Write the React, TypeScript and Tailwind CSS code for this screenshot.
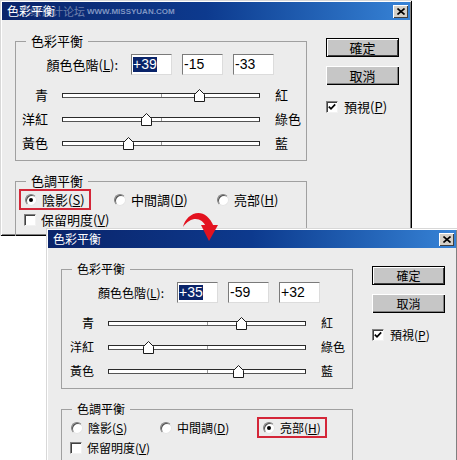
import React from "react";

type DlgProps = {
  values: [string, string, string];
  nums: [number, number, number];
  selected: 0 | 1 | 2;
  small?: boolean;
  watermark?: boolean;
  pos: string;
};

function Slider({ value }: { value: number }) {
  const left = Math.round(99 + value * 0.99 - 5.5);
  return (
    <div className="relative w-[198px] h-[13px] flex items-center">
      <div className="relative w-full h-[5px] border border-[#2a2a2a] border-b-[#555] bg-white">
        <div className="absolute left-[98px] top-0 h-full w-px bg-[#9a9a9a]" />
      </div>
      <svg className="absolute top-0" style={{ left }} width="11" height="13" viewBox="0 0 11 13">
        <path d="M5.5 0.5 L10.5 5.5 V12.5 H0.5 V5.5 Z" fill="#fff" stroke="#1a1a1a" />
      </svg>
    </div>
  );
}

function Radio({ checked }: { checked: boolean }) {
  return (
    <span className="w-[12px] h-[12px] shrink-0 rounded-full bg-white border border-t-[#808080] border-l-[#808080] border-b-[#e6e6e6] border-r-[#e6e6e6] shadow-[inset_1px_1px_0_#505050] flex items-center justify-center">
      {checked && <span className="w-[4px] h-[4px] rounded-full bg-black" />}
    </span>
  );
}

function Check({ checked }: { checked: boolean }) {
  return (
    <span className="w-[12px] h-[12px] shrink-0 bg-white border border-t-[#808080] border-l-[#808080] border-b-[#f2f2f2] border-r-[#f2f2f2] shadow-[inset_1px_1px_0_#404040] flex items-center justify-center">
      {checked && (
        <svg width="8" height="8" viewBox="0 0 8 8">
          <path d="M0.8 3.6 L3 5.8 L7.2 1.4" stroke="#000" strokeWidth="1.7" fill="none" />
        </svg>
      )}
    </span>
  );
}

function Dialog({ values, nums, selected, small, watermark, pos }: DlgProps) {
  const txt = small ? "text-[12px]" : "text-[13px]";
  const radios: [string, string][] = [
    ["陰影(", "S"],
    ["中間調(", "D"],
    ["亮部(", "H"],
  ];
  const widths = ["w-[89px]", "w-[103px]", "w-auto"];
  const rows: [string, string][] = [
    ["青", "紅"],
    ["洋紅", "綠色"],
    ["黃色", "藍"],
  ];
  return (
    <div
      className={`${pos} w-[412px] overflow-hidden bg-[#ececec] font-['Noto_Sans_CJK_TC','Noto_Sans',sans-serif] text-black leading-[16px] shadow-[inset_1px_1px_0_#d8d8d8,inset_-1px_-1px_0_#000,inset_2px_2px_0_#fff,inset_-2px_-2px_0_#808080]`}
    >
      <div className="relative mx-[2px] mt-[2px] h-[18px] flex items-center justify-between pl-[5px] pr-[2px] bg-linear-to-r from-[#0a246a] via-[#0d3a8e] to-[#3783d6]">
        <span className="text-white text-[12px] leading-none">色彩平衡</span>
        {watermark && (
          <>
            <span className="absolute left-[17px] top-[2px] text-[11px] leading-[14px] text-white/40">思缘设计论坛</span>
            <span className="absolute left-[85px] top-[5px] text-[8px] leading-[10px] font-bold text-[#9fb0d6]/80 font-['Liberation_Sans',sans-serif]">
              WWW.MISSYUAN.COM
            </span>
          </>
        )}
        <div className="w-[15px] h-[13px] bg-[#d4d0c8] shadow-[inset_1px_1px_0_#fff,inset_-1px_-1px_0_#404040] flex items-center justify-center">
          <svg width="8" height="7" viewBox="0 0 8 7">
            <path d="M0.5 0.5 L7.5 6.5 M7.5 0.5 L0.5 6.5" stroke="#000" strokeWidth="1.6" />
          </svg>
        </div>
      </div>

      <div className="flex pl-[15px] pt-[13px]">
        <div className="w-[292px]">
          <fieldset className="border border-[#a0a0a0] pb-[5px]">
            <legend className={`ml-[10px] px-[5px] leading-[16px] ${txt}`}>色彩平衡</legend>
            <div className="flex items-center mt-[5px] h-[21px]">
              <span className={`w-[102px] text-right ${txt}`}>
                顏色色階(<span className="underline">L</span>):
              </span>
              <div className="ml-[13px] flex gap-[10px]">
                {values.map((v, i) => (
                  <div
                    key={i}
                    className="w-[41px] h-[21px] bg-white border border-t-[#7a7a7a] border-l-[#7a7a7a] border-b-[#dcdcdc] border-r-[#dcdcdc] flex items-center pl-[1px] font-['Liberation_Sans',sans-serif] text-[14px] leading-[15px]"
                  >
                    {i === 0 ? <span className="bg-[#0a246a] text-white">{v}</span> : <span>{v}</span>}
                  </div>
                ))}
              </div>
            </div>
            <div className="mt-[8px]">
              {rows.map(([l, r], i) => (
                <div key={i} className={`flex items-center h-[24px] ${txt}`}>
                  <span className="w-[32px] text-right">{l}</span>
                  <div className="ml-[14px]">
                    <Slider value={nums[i]} />
                  </div>
                  <span className="ml-[15px]">{r}</span>
                </div>
              ))}
            </div>
          </fieldset>

          <fieldset className="mt-[12px] border border-[#a0a0a0] pb-[10px]">
            <legend className={`ml-[10px] px-[5px] leading-[16px] ${txt}`}>色調平衡</legend>
            <div className={`flex items-center h-[21px] pl-[3px] ${txt}`}>
              {radios.map(([t, k], i) => (
                <div key={i} className={widths[i]}>
                  <div
                    className={`inline-flex items-center h-[21px] border-2 pl-[4px] pr-[4px] ${
                      selected === i ? "border-[#d42638]" : "border-transparent"
                    }`}
                  >
                    <Radio checked={selected === i} />
                    <span className="ml-[5px]">
                      {t}
                      <span className="underline">{k}</span>)
                    </span>
                  </div>
                </div>
              ))}
            </div>
            <div className={`flex items-center h-[19px] pl-[8px] ${txt}`}>
              <Check checked={false} />
              <span className="ml-[5px]">
                保留明度(<span className="underline">V</span>)
              </span>
            </div>
          </fieldset>
        </div>

        <div className="ml-[19px] mt-[5px] w-[73px]">
          <div className={`h-[19px] flex items-center justify-center bg-[#c6c6c6] border border-black shadow-[inset_1px_1px_0_#fff,inset_-1px_-1px_0_#404040] ${txt}`}>
            確定
          </div>
          <div className={`mt-[9px] h-[19px] flex items-center justify-center bg-[#c6c6c6] shadow-[inset_1px_1px_0_#fff,inset_-1px_-1px_0_#000,inset_-2px_-2px_0_#808080] ${txt}`}>
            取消
          </div>
          <div className={`mt-[14px] h-[16px] flex items-center ${txt}`}>
            <Check checked={true} />
            <span className="ml-[6px]">
              預視(<span className="underline">P</span>)
            </span>
          </div>
        </div>
      </div>
    </div>
  );
}

export default function App() {
  return (
    <div className="relative w-[457px] h-[460px] overflow-hidden bg-white">
      <Dialog
        pos="absolute left-0 top-0 h-[236px]"
        values={["+39", "-15", "-33"]}
        nums={[39, -15, -33]}
        selected={0}
        watermark
      />
      <Dialog
        pos="absolute left-[46px] top-[228px] h-[240px]"
        values={["+35", "-59", "+32"]}
        nums={[35, -59, 32]}
        selected={2}
        small
      />
      <svg className="absolute left-[178px] top-[208px]" width="42" height="34" viewBox="0 0 42 34">
        <path d="M5 19 C8 5, 27 -4, 36 19 L28 19 C24 9, 13 8, 5 19 Z" fill="#e3121f" />
        <path d="M23 17 L40 17 L31 33 Z" fill="#e3121f" />
      </svg>
    </div>
  );
}
